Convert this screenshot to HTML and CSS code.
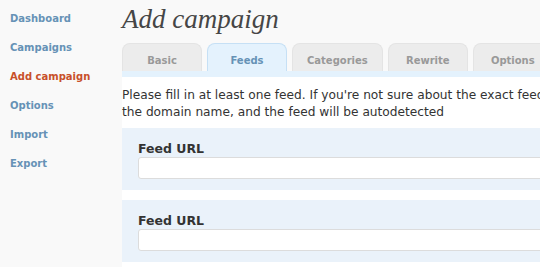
FILE: index.html
```
<!DOCTYPE html>
<html>
<head>
  <title>Add campaign</title>
  <link rel="stylesheet" href="styles.css">
</head>
<body>
<div class="page">
  <ul class="sidebar">
    <li><a href="#">Dashboard</a></li>
    <li><a href="#">Campaigns</a></li>
    <li class="current"><a href="#">Add campaign</a></li>
    <li><a href="#">Options</a></li>
    <li><a href="#">Import</a></li>
    <li><a href="#">Export</a></li>
  </ul>

  <div class="main">
    <h1>Add campaign</h1>

    <ul class="tabs">
      <li>Basic</li>
      <li class="active">Feeds</li>
      <li>Categories</li>
      <li>Rewrite</li>
      <li>Options</li>
      <li>Cron</li>
    </ul>
    <div class="tab-band"></div>

    <div class="tab-panel">
      <p class="intro">Please fill in at least one feed. If you're not sure about the exact feed url, just type in the domain name, and the feed will be autodetected</p>

      <div class="feed-row">
        <label for="feed1">Feed URL</label>
        <input type="text" id="feed1">
      </div>

      <div class="feed-row">
        <label for="feed2">Feed URL</label>
        <input type="text" id="feed2">
      </div>
    </div>
  </div>
</div>
</body>
</html>
```

FILE: styles.css
```
:root {
  --side-bg: #f9f9f9;
  --link-color: #6692b6;
  --current-color: #c8502a;
  --tab-bg: #ececec;
  --tab-active-bg: #e4f2fd;
  --tab-active-border: #c6e0f5;
  --row-bg: #eaf2fa;
  --text-color: #333333;
}

body {
  margin: 0;
  overflow: hidden;
  background-color: var(--side-bg);
  font-family: "DejaVu Sans", Verdana, sans-serif;
  color: var(--text-color);
}

.page {
  display: flex;
}

.sidebar {
  flex: none;
  width: 122px;
  margin: 0;
  padding: 4px 0 0 0;
  list-style: none;
}

.sidebar li {
  font-size: 10px;
  line-height: 29px;
  padding-left: 10px;
}

.sidebar a {
  color: var(--link-color);
  font-weight: bold;
  text-decoration: none;
}

.sidebar .current a {
  color: var(--current-color);
}

.main {
  flex: none;
  width: 760px;
}

h1 {
  margin: 0;
  height: 43px;
  line-height: 38px;
  font-family: "Liberation Serif", Georgia, serif;
  font-style: italic;
  font-weight: normal;
  font-size: 27px;
  color: #464646;
}

.tabs {
  display: flex;
  gap: 5px;
  margin: 0;
  padding: 0;
  list-style: none;
}

.tabs li {
  box-sizing: border-box;
  min-width: 80px;
  height: 28px;
  padding: 6px 14px 0;
  line-height: 22px;
  text-align: center;
  font-size: 10px;
  font-weight: bold;
  color: #999999;
  background-color: var(--tab-bg);
  border: 1px solid #e4e4e4;
  border-bottom: none;
  border-radius: 8px 8px 0 0;
}

.tabs li.active {
  color: var(--link-color);
  background-color: var(--tab-active-bg);
  border-color: var(--tab-active-border);
}

.tab-band {
  height: 6px;
  background-color: var(--tab-active-bg);
}

.tab-panel {
  background-color: #ffffff;
  padding: 10px 0 20px;
}

.intro {
  margin: 0 0 7px 0;
  font-size: 12.2px;
  line-height: 17px;
  width: 535px;
}

.feed-row {
  height: 62px;
  box-sizing: border-box;
  padding: 13px 16px 0;
  margin-bottom: 10px;
  background-color: var(--row-bg);
}

.feed-row label {
  display: block;
  font-size: 12.5px;
  font-weight: bold;
  line-height: 16px;
  margin-bottom: 0;
}

.feed-row input[type="text"] {
  display: block;
  box-sizing: border-box;
  width: 100%;
  height: 22px;
  margin: 0;
  border: 1px solid #dcdcdc;
  border-radius: 3px;
  background-color: #ffffff;
}
```
